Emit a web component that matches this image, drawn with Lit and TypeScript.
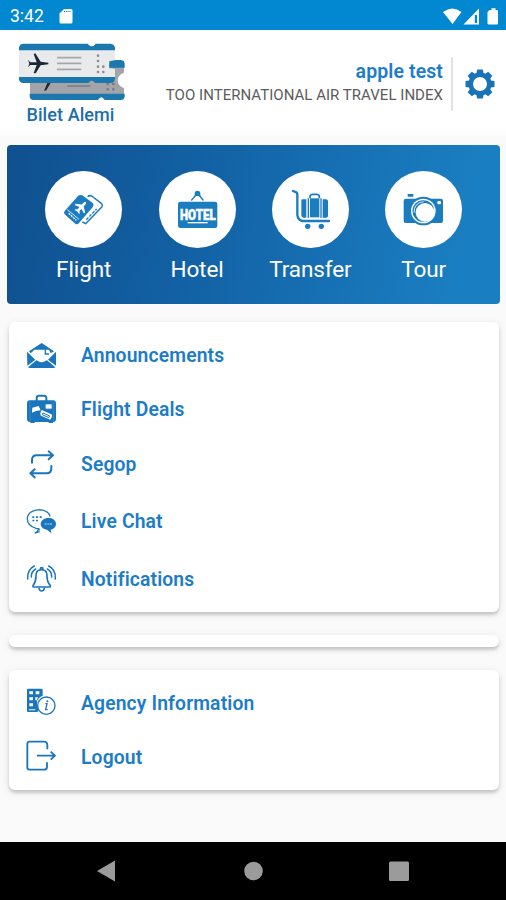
import { LitElement, html, svg, css } from "lit";
import { customElement, property } from "lit/decorators.js";

const icons: Record<string, unknown> = {
  announcements: svg`<svg viewBox="78 73 96 96">
    <path fill="currentColor" d="M125 82 L162 107 L152 113 L147 102 H103 L92 113 L87 107Z"/>
    <path fill="currentColor" d="M81 108 L106 132 L82 150Z M168 108 L144 132 L168 150Z"/>
    <path fill="currentColor" d="M84 155 L109 134 L120 139 Q125 141 130 139 L141 134 L166 155 Q164 157 160 157 H90 Q86 157 84 155Z"/>
    <path fill="none" stroke="currentColor" stroke-width="4" d="M136 101 V115 H147"/>
  </svg>`,
  deals: svg`<svg viewBox="78 235 96 96">
    <path fill="none" stroke="currentColor" stroke-width="6" d="M110 257 V247 Q110 240 117 240 H132 Q139 240 139 247 V257"/>
    <rect x="81" y="254" width="87" height="65" rx="9" fill="currentColor"/>
    <path fill="currentColor" d="M91 316 h13 v6 h-13z M146 316 h13 v6 h-13z"/>
    <g fill="#fff"><path d="M97 276 L116 271 L122 284 L108 286 L96 291Z"/><path d="M137 266 h18 v13 h-18z"/>
    <path d="M125 283 L154 296 Q158 299 155 305 L151 312 L123 300 Q119 297 122 290Z"/></g>
    <path fill="none" stroke="currentColor" stroke-width="3" d="M129 292 L149 301 L146 306 L127 297Z"/>
    <path stroke="#fff" stroke-width="1.5" d="M90 257 V317 M160 257 V317" opacity=".25"/>
  </svg>`,
  segop: svg`<svg viewBox="78 400 96 96" fill="none" stroke="currentColor" stroke-width="6" stroke-linecap="round" stroke-linejoin="round">
    <path d="M96 441 V433 Q96 419 110 419 H157 M146 407 L159 419 L146 431"/>
    <path d="M154 451 V458 Q154 473 140 473 H92 M104 461 L91 473 L104 485"/>
  </svg>`,
  chat: svg`<svg viewBox="78 60 96 96">
    <path fill="none" stroke="currentColor" stroke-width="4" d="M150 91 C145 64 82 63 82 99 C82 113 92 122 108 127 L118 128 M119 129 L116 133 M107 141 Q113 137 115 130 M104 141 L119 137"/>
    <g fill="currentColor"><path d="M97 91h6v5h-6z M108 91h6v5h-6z M119 91h6v5h-6z M97 101h6v5h-6z M108 101h6v5h-6z"/>
    <path d="M146 96 C160 96 168 104 168 114 C168 123 160 130 152 131 L154 142 L141 131 C130 130 122 123 122 114 C122 104 132 96 146 96Z"/></g>
    <path stroke="#fff" stroke-width="4" stroke-dasharray="6 2" opacity=".5" d="M134 114 H158"/>
  </svg>`,
  bell: svg`<svg viewBox="78 231 96 96" fill="none" stroke="currentColor" stroke-width="5" stroke-linecap="round" stroke-linejoin="round">
    <path d="M119 252 Q108 254 108 270 C108 285 105 291 99 299 Q98 303 101 303 H148 Q152 303 151 299 C144 291 141 285 141 270 Q141 254 130 252 Q125 250 119 252"/>
    <path d="M121 249 Q121 245 125 245 Q129 245 129 249 M117 307 Q119 315 125 315 Q131 315 133 307"/>
    <path stroke-width="4.500" d="M103 240 Q81 250 83 279 M107 249 Q93 257 94 273 M146 240 Q168 250 166 279 M142 249 Q156 257 155 273"/>
  </svg>`,
  agency: svg`<svg viewBox="78 81 96 96">
    <path fill="currentColor" d="M84 86 H124 Q128 86 128 90 V107 Q108 115 111 136 L116 151 Q115 156 111 156 H84 Q81 156 81 152 V90 Q81 86 84 86Z"/>
    <path fill="#fff" d="M88 94h11v9h-11z M107 94h11v9h-11z M88 112h11v9h-11z M106 112h8l-4 9h-4z M88 130h11v9h-11z M87 148h19v3h-19z"/>
    <circle cx="139" cy="137" r="26" fill="none" stroke="currentColor" stroke-width="4"/>
    <path fill="none" stroke="currentColor" stroke-width="4" d="M136 131 H141 L137 149 H143"/><circle cx="142" cy="124" r="3" fill="currentColor"/>
  </svg>`,
  logout: svg`<svg viewBox="78 243 96 96" fill="none" stroke="currentColor" stroke-width="5.500" stroke-linejoin="round">
    <path d="M142 268 V256 Q142 245 132 245 H89 Q82 245 82 252 V322 Q82 329 89 329 H132 Q141 329 141 320 V307"/>
    <path d="M111 287 H165 M152 275 L165 287 L152 299"/>
  </svg>`,
  flight: svg`<svg viewBox="135 93 231 231">
    <path fill="none" stroke="currentColor" stroke-width="4.5" stroke-linejoin="round" d="M263 170 Q268 165 275 168 L304 190 Q309 195 306 200 L257 251 L247 246"/>
    <path fill="none" stroke="currentColor" stroke-width="4" stroke-dasharray="9 4" d="M259 239 L290 207"/>
    <path fill="currentColor" d="M234 168 Q240 162 249 167 L278 189 Q283 194 279 200 L237 249 Q232 255 226 251 L194 223 Q190 218 194 213Z"/>
    <path fill="none" stroke="#fff" stroke-width="2.5" d="M202 209 L237 238"/>
    <path fill="none" stroke="#fff" stroke-width="4" stroke-dasharray="6 3" d="M206 220 L229 241"/>
    <path fill="#fff" transform="translate(244 201) rotate(42)" d="M0-20 Q4-20 4-13 V-6 L19 4 V9 L4 4 V13 L9 17 V20 L0 18 L-9 20 V17 L-4 13 V4 L-19 9 V4 L-4-6 V-13 Q-4-20 0-20Z"/>
  </svg>`,
  hotel: svg`<svg viewBox="475 93 231 231">
    <path fill="none" stroke="currentColor" stroke-width="4" stroke-linecap="round" d="M573 180 L586 165 M595 165 L607 180"/>
    <path fill="currentColor" d="M582 168 V159 Q583 152 590 152 Q598 152 599 159 V168Z"/>
    <rect x="532" y="185" width="118" height="79" rx="7" fill="currentColor"/>
    <text x="538" y="239" font-size="44" font-weight="900" textLength="107" lengthAdjust="spacingAndGlyphs" fill="#fff" stroke="#fff" stroke-width="1.5" font-family="Roboto, sans-serif">HOTEL</text>
    <path stroke="#fff" stroke-width="4" d="M561 248 H621"/>
  </svg>`,
  transfer: svg`<svg viewBox="65 93 231 231">
    <path fill="none" stroke="currentColor" stroke-width="7" stroke-linejoin="round" stroke-linecap="round" d="M128 153 L138 157 Q141 159 141 164 V225 Q143 241 157 243 H236"/>
    <path fill="currentColor" d="M157 178 H168 V233 H161 Q153 233 153 225 V182 Q153 178 157 178Z M217 178 H227 Q233 178 233 184 V228 Q233 233 227 233 H217Z M172 175h4v59h-4z M210 175h4v59h-4z"/>
    <path fill="currentColor" d="M179 175 H207 V232 H179Z"/>
    <path fill="none" stroke="currentColor" stroke-width="5" d="M179 175 V169 Q180 163 187 163 H199 Q206 163 207 169 V175"/>
    <circle cx="172" cy="259" r="8" fill="currentColor"/><circle cx="213" cy="259" r="8" fill="currentColor"/>
  </svg>`,
  tour: svg`<svg viewBox="407 93 231 231">
    <path fill="currentColor" d="M475 162 h17 v8 h-17z M470 176 H574 Q581 176 581 183 V243 Q581 249 575 249 H469 Q463 249 463 243 V183 Q463 176 470 176Z"/>
    <circle cx="522" cy="213" r="43" fill="currentColor"/>
    <circle cx="522" cy="213" r="37" fill="#fff"/>
    <circle cx="522" cy="213" r="32.500" fill="currentColor"/>
    <circle cx="527" cy="217" r="28" fill="#fff"/>
    <path fill="none" stroke="#fff" stroke-width="2.5" d="M494 218 Q494 188 523 185"/>
    <rect x="564" y="183" width="11" height="10" rx="3" fill="#fff"/>
  </svg>`,
};

const logo = svg`<svg viewBox="51 126 330 177" width="110" height="59">
  <path fill="#a3a4a9" d="M90 220 H326 V182 H372 V218 Q353 225 353 241 Q353 257 372 265 V282 H90Z"/>
  <path fill="#1a78ae" d="M328 203 V190 Q330 180 340 180 H362 Q374 182 374 192 V203Z M89 281 H374 V289 Q374 300 362 300 H314 Q304 284 294 300 H101 Q89 300 89 289Z"/>
  <path stroke="#77797f" stroke-width="4" d="M202 258 H271"/>
  <path fill="#222733" d="M132 273 L142 249 H152 L139 271Z"/>
  <g fill="#77797f"><circle cx="323" cy="268" r="4"/><circle cx="340" cy="268" r="4"/><circle cx="323" cy="252" r="4"/><circle cx="340" cy="252" r="4"/></g>
  <path fill="#e9eaec" d="M57 150 H345 V181 L327 183 V204 L345 207 V232 H57Z"/>
  <path fill="#1a78ae" d="M57 151 V143 Q59 131 70 131 H263 Q275 147 287 131 H332 Q343 132 345 143 V151Z M57 231 H345 V237 Q343 249 332 249 H285 Q275 234 265 249 H70 Q59 248 57 239Z"/>
  <path fill="#1d2636" d="M84 180 L91 187 H110 L101 162 L106 160 L122 185 L145 188 V193 L122 196 L107 220 L101 219 L110 195 H91 L84 202 L88 191Z"/>
  <path stroke="#a6a7aa" stroke-width="5" d="M171 173 H244 M171 190 H244 M171 208 H244"/>
  <g fill="#8c8d91"><circle cx="294" cy="167" r="4"/><circle cx="294" cy="183" r="4"/><circle cx="294" cy="200" r="4"/><circle cx="310" cy="200" r="4"/><circle cx="294" cy="216" r="4"/><circle cx="310" cy="216" r="4"/></g>
</svg>`;

const gearTeeth = [0, 45, 90, 135, 180, 225, 270, 315];

@customElement("menu-row")
export class MenuRow extends LitElement {
  @property() icon = "";
  @property() label = "";
  static styles = css`
    :host { display: flex; align-items: center; color: #1c7cc8; }
    .icon { display: flex; width: 32px; height: 32px; margin: 0 23.5px 0 17px; flex: none; color: #1976bd; }
    .icon svg { width: 32px; height: 32px; overflow: visible; }
    .label { padding-top: 1px; font-size: 19.3px; line-height: 24px; font-weight: 600; letter-spacing: .15px; white-space: nowrap; }
  `;
  render() {
    return html`<span class="icon">${icons[this.icon]}</span><span class="label">${this.label}</span>`;
  }
}

@customElement("service-tile")
export class ServiceTile extends LitElement {
  @property() icon = "";
  @property() label = "";
  static styles = css`
    :host { display: flex; flex-direction: column; align-items: center; }
    .disc { display: flex; width: 77px; height: 77px; border-radius: 50%; background: #fff; color: #1b7cc0; }
    .disc svg { width: 77px; height: 77px; }
    .label { margin-top: 7px; font-size: 22.5px; line-height: 28px; letter-spacing: -.1px; color: #fff; white-space: nowrap; }
  `;
  render() {
    return html`<span class="disc">${icons[this.icon]}</span><span class="label">${this.label}</span>`;
  }
}

@customElement("app-root")
export class AppRoot extends LitElement {
  static styles = css`
    :host { display: flex; flex-direction: column; width: 506px; height: 900px; overflow: hidden; background: #fafafa; font-family: Roboto, "Liberation Sans", sans-serif; }
    * { box-sizing: border-box; }
    .status { flex: none; height: 30px; background: #0288d1; color: #fff; display: flex; align-items: center; padding: 2px 7px 0 10px; }
    .time { font-size: 17.5px; line-height: 24px; width: 49px; }
    .grow { flex: 1; }
    .signals { width: 58px; height: 20px; }
    .header { flex: none; height: 107px; background: linear-gradient(#fff 92%, #fafafa); display: flex; padding-left: 17px; }
    .brand { width: 110px; padding-top: 12px; display: flex; flex-direction: column; }
    .brand-name { color: #1b6faa; font-size: 18px; font-weight: 500; line-height: 24px; margin-top: 2px; padding-left: 9.5px; letter-spacing: .08px; white-space: nowrap; }
    .account { flex: 1; text-align: right; padding-top: 29px; white-space: nowrap; }
    .user { color: #1c7ccb; font-size: 19.5px; font-weight: 600; line-height: 26px; letter-spacing: .1px; }
    .company { color: #5c5c5c; font-size: 15px; line-height: 20px; letter-spacing: .03px; }
    .divider { width: 2px; height: 54px; margin: 27px 12px 0 8px; background: #e2e2e2; }
    .gear { width: 30px; height: 30px; margin: 39px 11px 0 0; color: #1873b9; }
    .hero { flex: none; height: 159px; margin: 8px 6px 0 7px; padding: 26px 0 0 20px; border-radius: 4px; background: linear-gradient(100deg, #10508f 0%, #1261a4 38%, #1a7fc2 92%); display: grid; grid-template-columns: repeat(4, 113.35px); align-content: start; }
    .card { flex: none; margin: 0 7.5px 0 8.5px; background: #fff; border-radius: 6px; box-shadow: 0 3px 3px rgba(0,0,0,.15), 0 2px 8px rgba(0,0,0,.1); display: grid; }
    .main { margin-top: 18px; height: 290px; grid-template-rows: 54px 54px 56px 58px 57px; align-content: start; padding-top: 6.5px; }
    .empty { margin-top: 23px; height: 12px; }
    .more { margin-top: 23px; height: 119.5px; grid-template-rows: 54px 54px; align-content: start; padding-top: 6px; }
    .nav { flex: none; margin-top: auto; height: 58px; background: #000; }
  `;
  render() {
    return html`
      <div class="status">
        <span class="time">3:42</span>
        <svg width="14" height="17" viewBox="0 0 14 17"><path fill="#fff" d="M5 1 H12 Q13.5 1 13.5 2.5 V14 Q13.5 15.5 12 15.5 H2 Q.5 15.5 .5 14 V5.5Z"/><path stroke="#0288d1" stroke-width="1" stroke-dasharray="1.2 1" d="M5 3.5 H12"/></svg>
        <span class="grow"></span>
        <svg class="signals" viewBox="0 0 58 20">
          <path fill="#fff" d="M2 6 Q11.500 -1 20.500 6 L11.500 18Z"/>
          <path fill="#fff" fill-rule="evenodd" d="M38 2.500 V18.500 H22.500Z M33.800 9 V17 H36 V9Z"/>
          <path fill="#fff" d="M48.500 4 H50.500 V2.200 H54.500 V4 H56 Q57 4 57 5 V17.500 Q57 18.500 56 18.500 H48 Q46.500 18.500 46.500 17.500 V6Z"/>
        </svg>
      </div>
      <div class="header">
        <div class="brand">${logo}<span class="brand-name">Bilet Alemi</span></div>
        <div class="account">
          <div class="user">apple test</div>
          <div class="company">TOO INTERNATIONAL AIR TRAVEL INDEX</div>
        </div>
        <div class="divider"></div>
        <svg class="gear" viewBox="-15 -15 30 30">
          <circle r="9.300" fill="none" stroke="currentColor" stroke-width="4.600"/>
          ${gearTeeth.map((a) => svg`<path fill="currentColor" transform="rotate(${a})" d="M-3.600 -10.500 L-2.900 -14.500 H2.900 L3.600 -10.500Z"/>`)}
        </svg>
      </div>
      <div class="hero">
        <service-tile icon="flight" label="Flight"></service-tile>
        <service-tile icon="hotel" label="Hotel"></service-tile>
        <service-tile icon="transfer" label="Transfer"></service-tile>
        <service-tile icon="tour" label="Tour"></service-tile>
      </div>
      <div class="card main">
        <menu-row icon="announcements" label="Announcements"></menu-row>
        <menu-row icon="deals" label="Flight Deals"></menu-row>
        <menu-row icon="segop" label="Segop"></menu-row>
        <menu-row icon="chat" label="Live Chat"></menu-row>
        <menu-row icon="bell" label="Notifications"></menu-row>
      </div>
      <div class="card empty"></div>
      <div class="card more">
        <menu-row icon="agency" label="Agency Information"></menu-row>
        <menu-row icon="logout" label="Logout"></menu-row>
      </div>
      <svg class="nav" width="506" height="58" viewBox="0 0 506 58" fill="#9b9b9b">
        <path d="M97 29 L115 18.500 V39.500Z"/><circle cx="253.500" cy="29" r="9.300"/><rect x="389" y="19.500" width="20" height="19.500" rx="1.500"/>
      </svg>
    `;
  }
}
